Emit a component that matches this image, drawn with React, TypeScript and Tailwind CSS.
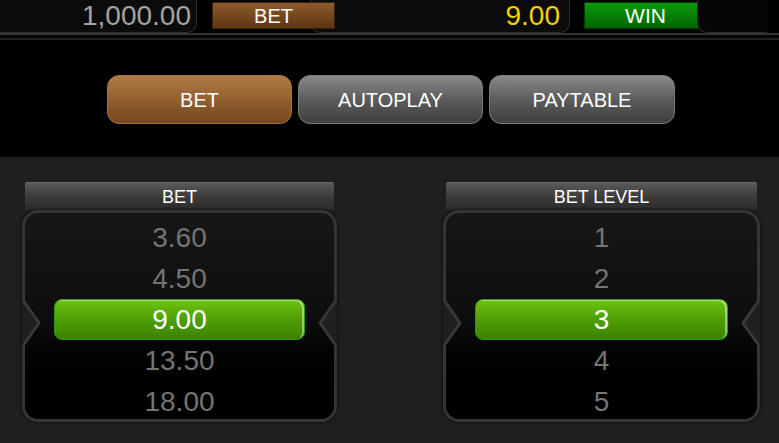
import React from "react";

const Notch: React.FC<{ side: "left" | "right" }> = ({ side }) => (
  <svg
    width="20"
    height="44"
    viewBox="0 0 20 44"
    className={
      side === "left"
        ? "absolute left-[-3px] top-[88px]"
        : "absolute right-[-3px] top-[88px] -scale-x-100"
    }
  >
    <polygon points="0,0 17,22 0,44" fill="#1f1f1f" />
    <polyline points="1.5,0 17,22 1.5,44" fill="none" stroke="#383838" strokeWidth="3" />
  </svg>
);

const Picker: React.FC<{ title: string; items: string[]; selected: number; width: string }> = ({
  title,
  items,
  selected,
  width,
}) => (
  <div className={`flex flex-col ${width}`}>
    <div className="mx-[3px] h-[28px] flex items-center justify-center rounded-t-[2px] bg-gradient-to-b from-[#5a5a5a] via-[#3c3c3c] to-[#2a2a2a] border-t border-[#6a6a6a] text-white text-[18px] leading-none">
      {title}
    </div>
    <div className="relative h-[212px] rounded-[16px] border-[3px] border-[#353535] bg-gradient-to-b from-[#171717] via-[#0e0e0e] to-black shadow-[0_0_3px_#000] pt-[4px]">
      <Notch side="left" />
      <Notch side="right" />
      {items.map((v, i) =>
        i === selected ? (
          <div
            key={v}
            className="relative mx-[29px] h-[41px] rounded-[8px] border border-[#2c9a10] bg-gradient-to-b from-[#6ec412] via-[#4f9e06] to-[#3b8200] flex items-center justify-center text-white text-[28px] leading-none shadow-[inset_-2px_1px_0_rgba(255,255,255,0.45)]"
          >
            {v}
          </div>
        ) : (
          <div key={v} className="h-[41px] flex items-center justify-center text-[#747474] text-[28px] leading-none">
            {v}
          </div>
        )
      )}
    </div>
  </div>
);

export default function App() {
  return (
    <div className="w-[779px] h-[443px] bg-black overflow-hidden flex flex-col font-['Liberation_Sans',Arial,sans-serif]">
      {/* top status bar */}
      <div className="h-[35px] flex items-start border-b-2 border-[#343434]">
        <div className="w-[197px] h-[33px] rounded-br-[10px] border-r border-b border-[#2c2c2c] bg-[#0b0b0b] flex items-center justify-end pr-[5px] text-[#a3a3a3] text-[28px] leading-none">
          1,000.00
        </div>
        <div className="relative z-10 ml-[15px] mt-[2px] w-[123px] h-[27px] bg-gradient-to-b from-[#8e5b2b] to-[#5d3513] border border-[#3a220c] flex items-center justify-center text-white text-[20px] leading-none">
          BET
        </div>
        <div className="ml-[-25px] w-[260px] h-[33px] rounded-b-[10px] border-x border-b border-[#2c2c2c] bg-[#0b0b0b] flex items-center justify-end pr-[9px] text-[#f2d100] text-[28px] leading-none">
          9.00
        </div>
        <div className="ml-[14px] mt-[2px] w-[123px] h-[27px] bg-gradient-to-b from-[#0c9a0c] to-[#006500] border border-[#003a00] flex items-center justify-center text-white text-[21px] leading-none">
          WIN
        </div>
        <div className="ml-[-10px] w-[70px] h-[33px] rounded-bl-[10px] border-l border-b border-[#2c2c2c] bg-[#050505]" />
      </div>
      <div className="h-[3px] border-b-2 border-[#222] box-content" />

      {/* tabs */}
      <div className="h-[117px] flex items-start pl-[107px] pt-[35px] gap-[6px]">
        <div className="w-[185px] h-[49px] rounded-[12px] border border-[#a87546] bg-gradient-to-b from-[#b07b45] via-[#93602f] to-[#74461b] shadow-[0_2px_3px_#000] flex items-center justify-center text-white text-[20px] leading-none">
          BET
        </div>
        <div className="w-[185px] h-[49px] rounded-[12px] border border-[#7c7c7c] bg-gradient-to-b from-[#8a8a8a] via-[#5c5c5c] to-[#3f3f3f] shadow-[0_2px_3px_#000] flex items-center justify-center text-white text-[20px] leading-none">
          AUTOPLAY
        </div>
        <div className="w-[186px] h-[49px] rounded-[12px] border border-[#7c7c7c] bg-gradient-to-b from-[#8a8a8a] via-[#5c5c5c] to-[#3f3f3f] shadow-[0_2px_3px_#000] flex items-center justify-center text-white text-[20px] leading-none">
          PAYTABLE
        </div>
      </div>

      {/* pickers */}
      <div className="flex-1 bg-[#1f1f1f] flex items-start pl-[22px] pt-[25px] gap-[106px]">
        <Picker title="BET" items={["3.60", "4.50", "9.00", "13.50", "18.00"]} selected={2} width="w-[315px]" />
        <Picker title="BET LEVEL" items={["1", "2", "3", "4", "5"]} selected={2} width="w-[317px]" />
      </div>
    </div>
  );
}
